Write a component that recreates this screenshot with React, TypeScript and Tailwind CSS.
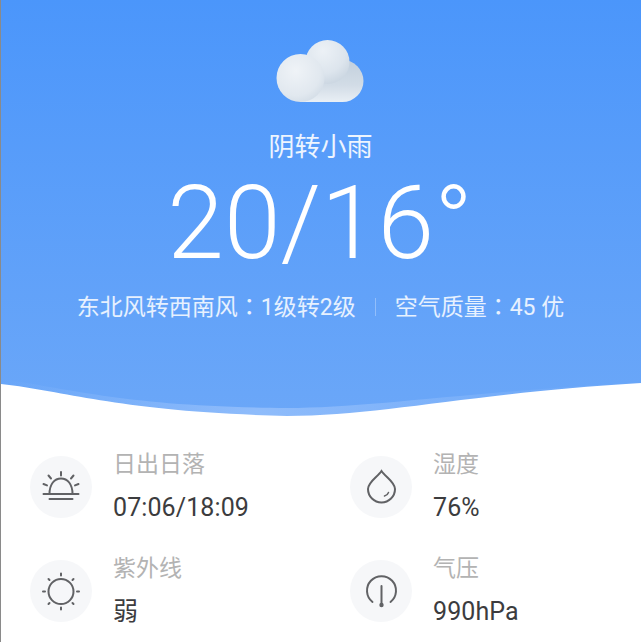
import React from "react";

const font = { fontFamily: '"Roboto","Noto Sans CJK SC",sans-serif' };

function Cloud() {
  return (
    <svg width="90" height="68" viewBox="0 0 90 68" className="block">
      <defs>
        <radialGradient id="c1" cx="0.4" cy="0.25" r="0.85">
          <stop offset="0" stopColor="#ecf1f6" />
          <stop offset="0.6" stopColor="#dde5ed" />
          <stop offset="1" stopColor="#c6d2de" />
        </radialGradient>
        <radialGradient id="c2" cx="0.4" cy="0.35" r="0.8">
          <stop offset="0" stopColor="#eff3f7" />
          <stop offset="0.65" stopColor="#e1e8ef" />
          <stop offset="1" stopColor="#ccd7e2" />
        </radialGradient>
        <linearGradient id="c3" gradientUnits="userSpaceOnUse" x1="0" y1="24" x2="0" y2="66">
          <stop offset="0" stopColor="#c3d0dd" />
          <stop offset="0.6" stopColor="#d2dce6" />
          <stop offset="1" stopColor="#e9eff5" />
        </linearGradient>
      </defs>
      <g style={{ filter: "blur(0.5px)" }}>
        <path d="M24 66 H66.5 A21 21 0 0 0 66.5 24 H24 Z" fill="url(#c3)" />
        <circle cx="51.5" cy="26" r="22" fill="url(#c1)" />
        <circle cx="24.5" cy="42" r="24" fill="url(#c2)" />
      </g>
    </svg>
  );
}

const iconProps = {
  width: 40,
  height: 40,
  viewBox: "0 0 40 40",
  fill: "none",
  stroke: "#616265",
  strokeWidth: 2,
  strokeLinecap: "round" as const,
};

function Sunrise() {
  return (
    <svg {...iconProps}>
      <path d="M8.5 27 C8.5 17 13.5 11.5 20 11.5 C26.5 11.5 31.5 17 31.5 27" />
      <path d="M2.5 27h35M8.5 32h23" />
      <path d="M20 5v3.5M7.5 8.5l2.5 3M32.5 8.5l-2.5 3M2.5 17l3.5 1.4M37.5 17l-3.5 1.4" />
    </svg>
  );
}
function Sun() {
  return (
    <svg {...iconProps}>
      <circle cx="20" cy="20.5" r="12.5" />
      <path d="M20 2.5v2M20 36.5v2M2 20.5h2M36 20.5h2M7.5 8l1 1M32.5 8l-1 1M7.5 33l1-1M32.5 33l-1-1" />
    </svg>
  );
}
function Drop() {
  return (
    <svg {...iconProps}>
      <path d="M20.5 4C16.5 10 7 15 7 22a13.5 13.5 0 0 0 27 0C34 15 24.5 10 20.5 4Z" />
      <path d="M23.5 29a5.5 5.5 0 0 0 4-3.5" strokeWidth={1.5} />
    </svg>
  );
}
function Gauge() {
  return (
    <svg {...iconProps}>
      <path d="M11.5 31 A14.5 14.5 0 1 1 29.5 31" />
      <path d="M20.5 15V33" />
      <circle cx="20.5" cy="34" r="2.2" fill="#616265" stroke="none" />
    </svg>
  );
}

function Item({ icon, label, value }: { icon: React.ReactNode; label: string; value: string }) {
  return (
    <div className="flex items-start">
      <div className="w-[62px] h-[62px] rounded-full bg-[#f6f7f9] flex items-center justify-center shrink-0 mt-[5px]">
        {icon}
      </div>
      <div className="ml-[21px] flex flex-col">
        <div className="text-[23px] leading-[28px] text-[#b3b3b3]">{label}</div>
        <div className="text-[25px] leading-[30px] tracking-[0.1px] text-[#3c3c3e] mt-[14px]">{value}</div>
      </div>
    </div>
  );
}

const Colon = () => <span className="font-['Noto_Sans_CJK_TC']">：</span>;

export default function App() {
  return (
    <div style={font} className="relative w-[641px] h-[642px] bg-white overflow-hidden border-l border-[#8a8a8a]">
      <div className="relative h-[420px] bg-gradient-to-b from-[#4b96fb] to-[#6ba7f8] flex flex-col items-center">
        <div className="mt-[36px] -ml-px">
          <Cloud />
        </div>
        <div className="mt-[27px] text-[26px] leading-[32px] text-white/90 -ml-px">阴转小雨</div>
        <div className="mt-[5px] text-[102px] leading-[110px] font-light text-white -ml-[2px]">20/16°</div>
        <div className="mt-[12px] flex items-center text-[23px] leading-[30px] text-white/85 -ml-px">
          <span>东北风转西南风<Colon />1级转2级</span>
          <span className="w-px h-[18px] bg-white/30 mx-[19px]" />
          <span>空气质量<Colon />45 优</span>
        </div>
        <svg className="absolute left-0 bottom-0" width="641" height="45" viewBox="0 0 641 45" preserveAspectRatio="none">
          <defs>
            <linearGradient id="band" x1="0" y1="0" x2="1" y2="0">
              <stop offset="0" stopColor="#8fbcfb" stopOpacity="0" />
              <stop offset="0.4" stopColor="#8fbcfb" />
              <stop offset="0.85" stopColor="#8fbcfb" stopOpacity="0.2" />
            </linearGradient>
          </defs>
          <path d="M0 4 C70 14 130 32 286 33 C370 33 480 15 641 8 V45 H0 Z" fill="url(#band)" />
          <path d="M-1 9 C70 17 120 37 286 41 C380 41 470 18 641 8 V45 H-1 Z" fill="#ffffff" />
        </svg>
      </div>
      <div className="grid grid-cols-[320px_1fr] pl-[29px] gap-y-[32px] mt-[31px]">
        <Item icon={<Sunrise />} label="日出日落" value="07:06/18:09" />
        <Item icon={<Drop />} label="湿度" value="76%" />
        <Item icon={<Sun />} label="紫外线" value="弱" />
        <Item icon={<Gauge />} label="气压" value="990hPa" />
      </div>
    </div>
  );
}
